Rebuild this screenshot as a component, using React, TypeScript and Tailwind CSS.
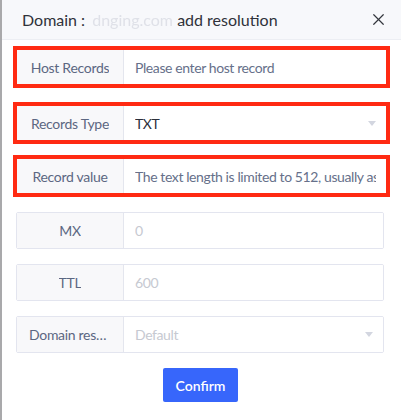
import { X } from 'lucide-react'

const FONT = { fontFamily: 'Lato, "Noto Sans", "Noto Sans CJK SC", sans-serif' }

type Row = {
  label: string
  value: string
  tone: 'placeholder' | 'text' | 'disabled'
  select?: boolean
}

const marked: Row[] = [
  { label: 'Host Records', value: 'Please enter host record', tone: 'placeholder' },
  { label: 'Records Type', value: 'TXT', tone: 'text', select: true },
  { label: 'Record value', value: 'The text length is limited to 512, usually as a verification record', tone: 'placeholder' },
]

const plain: Row[] = [
  { label: 'MX', value: '0', tone: 'disabled' },
  { label: 'TTL', value: '600', tone: 'disabled' },
  { label: 'Domain resolution line', value: 'Default', tone: 'disabled', select: true },
]

const Arrow = () => (
  <svg width="8" height="5" viewBox="0 0 8 5" className="shrink-0">
    <path d="M0 0h8L4 5z" fill="#d3d6e0" />
  </svg>
)

const Field = ({ row, h }: { row: Row; h: string }) => {
  const valueColor =
    row.tone === 'text' ? 'text-[#2b2f3a]' : row.tone === 'disabled' ? 'text-[#c6c9d1]' : 'text-[#66708a]'
  return (
    <div className={`flex ${h} w-full bg-white`}>
      <div className="flex w-[107px] shrink-0 items-center justify-center border-r border-[#e4e6ee] bg-[#f8f8fa] px-[12px]">
        <span className="truncate text-[14px] tracking-[-0.3px] text-[#5c6782]">{row.label}</span>
      </div>
      <div className="flex min-w-0 flex-1 items-center overflow-hidden pl-[11px] pr-[10px]">
        <span className={`min-w-0 flex-1 overflow-hidden whitespace-nowrap text-[14px] tracking-[-0.4px] ${valueColor}`}>
          {row.value}
        </span>
        {row.select && <Arrow />}
      </div>
    </div>
  )
}

export default function App() {
  return (
    <div className="flex h-[420px] w-[401px] bg-[#a9a9ab]" style={FONT}>
      <div className="ml-[2px] flex flex-1 flex-col bg-white">
        {/* header */}
        <div className="flex h-[40px] shrink-0 items-center justify-between border-b border-[#eceef3] bg-[#f7f8fb] pl-[20px] pr-[13px]">
          <div className="text-[16px] text-[#2f323a]">
            Domain : <span className="ml-[3px] text-[#dfe1e8] blur-[0.6px]">dnging.com</span>{' '}
            <span>add resolution</span>
          </div>
          <X size={19} strokeWidth={1.5} className="text-[#33363d]" />
        </div>

        {/* highlighted rows */}
        <div className="mt-[6px] flex flex-col pl-[11px]">
          {marked.map((r, i) => (
            <div
              key={r.label}
              className={`w-[377px] border-[4px] border-[#ff2a12] ${i === 1 ? 'mt-[14px]' : i === 2 ? 'mt-[11px]' : ''}`}
            >
              <Field row={r} h="h-[34px]" />
            </div>
          ))}
        </div>

        {/* plain rows */}
        <div className="mt-[15px] flex flex-col gap-[15px] pl-[14px]">
          {plain.map((r) => (
            <div key={r.label} className="w-[368px] overflow-hidden rounded-[2px] border border-[#e3e5ef]">
              <Field row={r} h="h-[35px]" />
            </div>
          ))}
        </div>

        <div className="mt-[15px] flex justify-center pr-[2px]">
          <button className="h-[34px] w-[75px] rounded-[2px] bg-[#3766fb] text-[14px] font-semibold text-white">
            Confirm
          </button>
        </div>
      </div>
    </div>
  )
}
